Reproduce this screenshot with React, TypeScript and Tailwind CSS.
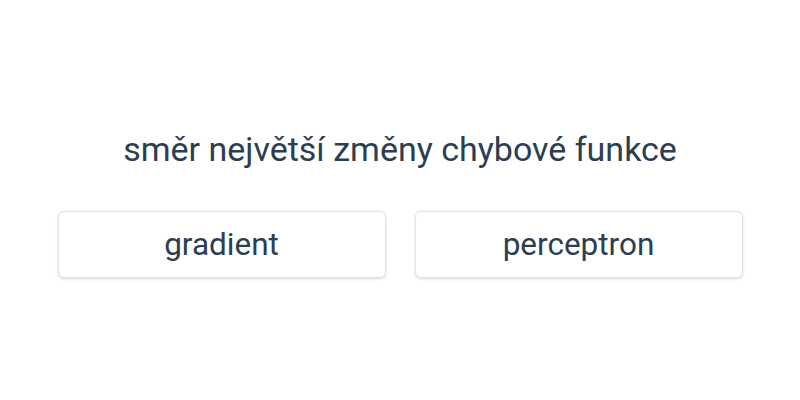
export default function App() {
  const options = ["gradient", "perceptron"];

  return (
    <div
      className="flex h-[400px] w-[800px] flex-col items-center bg-white pt-[129px] text-[#2c3e50]"
      style={{ fontFamily: "Roboto, 'Noto Sans', sans-serif" }}
    >
      <h1 className="text-[34px] font-normal leading-[40px]">směr největší změny chybové funkce</h1>
      <div className="mt-[42px] flex gap-[29px]">
        {options.map((option) => (
          <button
            key={option}
            type="button"
            className="h-[67px] w-[328px] rounded-md border border-[#e2e2e2] bg-white text-[31.5px] text-[#2c3e50] shadow-[0_1px_3px_rgba(0,0,0,0.15)]"
          >
            {option}
          </button>
        ))}
      </div>
    </div>
  );
}
